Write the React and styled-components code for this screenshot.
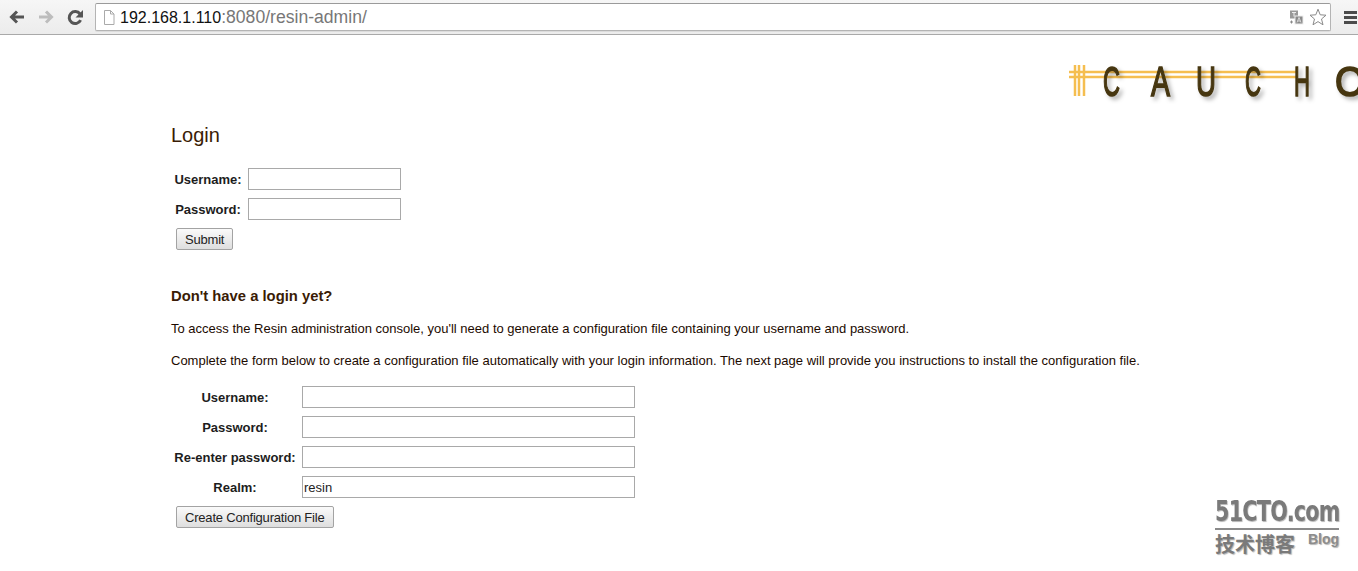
import styled, { createGlobalStyle } from 'styled-components';

const GlobalStyle = createGlobalStyle`
  html, body {
    margin: 0;
    padding: 0;
    background: #fff;
    overflow: hidden;
  }
  body {
    font-family: "Liberation Sans", Arial, sans-serif;
    font-size: 13px;
    color: #1c0a00;
  }
`;

const Toolbar = styled.div`
  display: flex;
  align-items: center;
  height: 34px;
  padding: 0 0 0 8px;
  background: linear-gradient(#f6f6f6, #ececec);
  border-bottom: 1px solid #a9a9a9;
`;

const NavButton = styled.div`
  display: flex;
  align-items: center;
  justify-content: center;
  width: 18px;
  height: 18px;
  margin-right: ${(p) => p.$gap}px;
`;

const AddressBar = styled.div`
  flex: 1;
  display: flex;
  align-items: center;
  height: 26px;
  padding: 0 3px 0 7px;
  background: #fff;
  border: 1px solid #b4b4b4;
  border-top-color: #9a9a9a;
  border-radius: 2px;
  box-shadow: 0 1px 0 #dcdcdc;
`;

const Url = styled.div`
  flex: 1;
  margin-left: 5px;
  font-size: 17.6px;
  color: #777;
  white-space: nowrap;
  span {
    font-size: 16px;
    color: #111;
  }
`;

const Menu = styled.div`
  display: flex;
  flex-direction: column;
  gap: 2px;
  width: 13px;
  margin: 0 1px 0 13px;
  i {
    display: block;
    height: 3px;
    background: #4b4b4b;
  }
`;

const LogoRow = styled.div`
  display: flex;
  justify-content: flex-end;
  height: 76px;
  padding-top: 20px;
  box-sizing: border-box;
`;

const Content = styled.main`
  padding-left: 171px;
`;

const Title = styled.h1`
  margin: 12px 0 0;
  font-size: 20px;
  line-height: 24px;
  font-weight: normal;
  color: #3a1c05;
`;

const FormGrid = styled.div`
  display: grid;
  grid-template-columns: ${(p) => p.$label}px ${(p) => p.$field}px;
  grid-auto-rows: 22px;
  row-gap: 8px;
  margin: ${(p) => p.$top}px 0 0 3px;
`;

const Label = styled.label`
  align-self: center;
  padding-right: 6px;
  text-align: center;
  font-size: 13px;
  font-weight: bold;
  color: #1d1d1d;
  white-space: nowrap;
`;

const Field = styled.input`
  box-sizing: border-box;
  width: 100%;
  height: 22px;
  margin: 0;
  padding: 1px 1px 0 1px;
  border: 1px solid #a9a9a9;
  border-radius: 0;
  background: #fff;
  outline: none;
  font-family: inherit;
  font-size: 13px;
  color: #222;
`;

const Button = styled.button`
  box-sizing: border-box;
  display: block;
  height: 22px;
  margin: 8px 0 0 5px;
  padding: 0 8px;
  border: 1px solid #a3a3a3;
  border-radius: 2px;
  background: linear-gradient(#fafafa, #dedede);
  font-family: inherit;
  font-size: 13px;
  letter-spacing: -0.2px;
  color: #222;
`;

const SubTitle = styled.h2`
  margin: 37px 0 0;
  font-size: 14.800px;
  line-height: 18px;
  font-weight: bold;
  color: #3a1c05;
`;

const Text = styled.p`
  margin: ${(p) => p.$top}px 0 0;
  font-size: 13px;
  line-height: 16px;
  color: #1c0a00;
  white-space: nowrap;
`;

const Watermark = styled.div`
  position: absolute;
  left: 1215px;
  top: 497px;
  width: 124px;
  color: #7a7a7a;
  text-shadow: 1px 1px 1px #b5b5b5;
`;

const MarkTitle = styled.div`
  height: 30px;
  font-family: "DejaVu Sans", sans-serif;
  font-size: 28px;
  line-height: 30px;
  font-weight: bold;
  letter-spacing: -1px;
  white-space: nowrap;
  transform: scaleX(0.74);
  transform-origin: left center;
`;

const MarkRow = styled.div`
  display: flex;
  justify-content: space-between;
  margin-top: 1px;
  padding-top: 2px;
  border-top: 2px solid #8a8a8a;
`;

const MarkCn = styled.div`
  font-family: "Noto Sans CJK SC", sans-serif;
  font-size: 20px;
  line-height: 24px;
  font-weight: bold;
  white-space: nowrap;
`;

const MarkBlog = styled.div`
  font-size: 14px;
  line-height: 14px;
  font-weight: bold;
  color: #8c8c8c;
`;

const Logo = styled.svg`
  display: block;
  flex: none;
  text {
    font-family: "Liberation Sans", sans-serif;
    font-size: 43px;
    fill: #463610;
    stroke: #463610;
    stroke-width: 1.6px;
  }
`;

const BackIcon = ({ color, flip }) => (
  <svg width="18" height="18" viewBox="0 0 18 18" style={flip ? { transform: 'scaleX(-1)' } : undefined}>
    <path d="M16 9H4M9 3.500 3.500 9 9 14.500" fill="none" stroke={color} strokeWidth="3" />
  </svg>
);

const letters = [
  ['C', 35, 17],
  ['A', 83, 19],
  ['U', 128, 20],
  ['C', 177, 16],
  ['H', 226, 16],
  ['O', 267, 30],
];

const App = () => (
  <>
    <GlobalStyle />
    <Toolbar>
      <NavButton $gap={11}><BackIcon color="#555" /></NavButton>
      <NavButton $gap={11}><BackIcon color="#bdbdbd" flip /></NavButton>
      <NavButton $gap={11}>
        <svg width="17" height="17" viewBox="0 0 17 17">
          <path d="M13.600 11.200A6 6 0 1 1 13 5" fill="none" stroke="#555" strokeWidth="3" />
          <path d="M16 1v7.500H8.500z" fill="#555" />
        </svg>
      </NavButton>
      <AddressBar>
        <svg width="12" height="15" viewBox="0 0 12 15">
          <path d="M1.500.5h6l3.500 3.500v10.500h-9.500zM7.500.5v3.500h3.500" fill="#fff" stroke="#aaa" />
        </svg>
        <Url><span>192.168.1.110</span>:8080/resin-admin/</Url>
        <svg width="15" height="15" viewBox="0 0 15 15">
          <rect x="1" y="0.500" width="8" height="8" fill="#999" />
          <path d="M3 2.500h4M5 2.500v4" stroke="#eee" />
          <rect x="6" y="6" width="8" height="8" fill="#8a8a8a" stroke="#eee" />
          <path d="M8 12.500 10 7.500 12 12.500M8.800 11h2.400" fill="none" stroke="#eee" strokeWidth="0.8" />
          <path d="M1 12h3M2.500 10.500v3" stroke="#888" />
        </svg>
        <svg width="18" height="18" viewBox="0 0 18 18" style={{ marginLeft: 5 }}>
          <path d="M9 1.200 11.200 6.800 17 7.200 12.500 11 14 16.800 9 13.600 4 16.800 5.500 11 1 7.200 6.800 6.800z" fill="#fff" stroke="#8a8a8a" />
        </svg>
      </AddressBar>
      <Menu><i /><i /><i /></Menu>
    </Toolbar>

    <LogoRow>
      <Logo width="290" height="56" viewBox="0 0 290 56" role="img" aria-label="Caucho">
        <g stroke="#f5be50" strokeWidth="2.500">
          <path d="M1 17H230M1 22H230" />
          <path d="M7 10V41M11 10V41M16 10V41" />
        </g>
        <g style={{ filter: 'drop-shadow(3px 3px 2px rgba(0,0,0,.3))' }}>
          {letters.map(([ch, x, w], i) => (
            <text key={i} x={x} y="41" textLength={w} lengthAdjust="spacingAndGlyphs">{ch}</text>
          ))}
        </g>
      </Logo>
    </LogoRow>

    <Content>
      <Title>Login</Title>
      <FormGrid $label={74} $field={153} $top={21}>
        <Label>Username:</Label>
        <Field />
        <Label>Password:</Label>
        <Field />
      </FormGrid>
      <Button>Submit</Button>

      <SubTitle>Don't have a login yet?</SubTitle>
      <Text $top={16}>To access the Resin administration console, you'll need to generate a configuration file containing your username and password.</Text>
      <Text $top={16}>Complete the form below to create a configuration file automatically with your login information. The next page will provide you instructions to install the configuration file.</Text>

      <FormGrid $label={128} $field={333} $top={17}>
        <Label>Username:</Label>
        <Field />
        <Label>Password:</Label>
        <Field />
        <Label>Re-enter password:</Label>
        <Field />
        <Label>Realm:</Label>
        <Field defaultValue="resin" />
      </FormGrid>
      <Button>Create Configuration File</Button>
    </Content>

    <Watermark>
      <MarkTitle>51CTO.com</MarkTitle>
      <MarkRow>
        <MarkCn>技术博客</MarkCn>
        <MarkBlog>Blog</MarkBlog>
      </MarkRow>
    </Watermark>
  </>
);

export default App;
